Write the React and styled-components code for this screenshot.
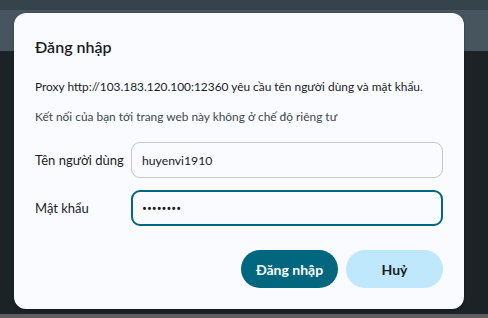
import React from "react";
import styled, { createGlobalStyle } from "styled-components";

const FONT = `"Lato", "Noto Sans", sans-serif`;

const Global = createGlobalStyle`
  html, body { margin: 0; padding: 0; }
  body { width: 488px; height: 318px; overflow: hidden; font-family: ${FONT}; }
  * { box-sizing: border-box; }
`;

const Page = styled.div`
  position: relative;
  width: 488px;
  height: 318px;
  display: flex;
  flex-direction: column;
  background: #1c2326;
`;

const TopStrip = styled.div`
  height: 10px;
  background: #37434b;
`;

const TabBar = styled.div`
  height: 41px;
  background: #46555e;
`;

const Content = styled.div`
  flex: 1;
  background: #1c2326;
`;

const StatusStrip = styled.div`
  height: 4px;
  background: #5e5e5e;
`;

const Dialog = styled.div`
  position: absolute;
  left: 14px;
  top: 13px;
  width: 450px;
  height: 296px;
  background: #f9fbff;
  border-radius: 12px;
  box-shadow: 0 1px 3px rgba(0, 0, 0, 0.35);
  padding: 23px 21px 0 21px;
  display: flex;
  flex-direction: column;
  color: #1a1c1e;
`;

const Title = styled.h1`
  margin: 0;
  font-size: 16px;
  font-weight: 600;
  line-height: 22px;
`;

const Text = styled.p`
  margin: ${(p) => p.$mt}px 0 0 0;
  font-size: 11.9px;
  line-height: 18px;
  white-space: nowrap;
  color: ${(p) => (p.$muted ? "#41484d" : "#1a1c1e")};
`;

const Form = styled.div`
  margin-top: 16px;
  display: flex;
  flex-direction: column;
  gap: 12px;
`;

const Row = styled.div`
  display: flex;
  align-items: center;
`;

const Label = styled.label`
  width: 96px;
  flex: none;
  font-size: 13px;
  color: #1a1c1e;
`;

const Input = styled.input`
  flex: 1;
  height: 36px;
  border-radius: 9px;
  border: ${(p) => (p.$focused ? "2px solid #00677f" : "1px solid #c4c7cb")};
  background: #f9fbff;
  padding: 0 ${(p) => (p.$focused ? 9 : 10)}px;
  font-family: ${(p) => (p.type === "password" ? `"Noto Sans", sans-serif` : FONT)};
  font-size: ${(p) => (p.type === "password" ? 13 : 12.2)}px;
  color: #1a1c1e;
  outline: none;
`;

const Actions = styled.div`
  margin-top: 24px;
  display: flex;
  justify-content: flex-end;
  gap: 8px;
`;

const Button = styled.button`
  width: 97px;
  height: 38px;
  border-radius: 19px;
  border: none;
  font-family: ${FONT};
  font-size: 14px;
  font-weight: 700;
  background: ${(p) => (p.$primary ? "#00677f" : "#bfe8fc")};
  color: ${(p) => (p.$primary ? "#ffffff" : "#1a1c1e")};
  cursor: pointer;
`;

export default function App() {
  return (
    <>
      <Global />
      <Page>
        <TopStrip />
        <TabBar />
        <Content />
        <StatusStrip />
        <Dialog>
          <Title>Đăng nhập</Title>
          <Text $mt={20}>Proxy http://103.183.120.100:12360 yêu cầu tên người dùng và mật khẩu.</Text>
          <Text $mt={12} $muted>Kết nối của bạn tới trang web này không ở chế độ riêng tư</Text>
          <Form>
            <Row>
              <Label>Tên người dùng</Label>
              <Input defaultValue="huyenvi1910" />
            </Row>
            <Row>
              <Label>Mật khẩu</Label>
              <Input type="password" defaultValue="abcdefgh" $focused />
            </Row>
          </Form>
          <Actions>
            <Button $primary>Đăng nhập</Button>
            <Button>Huỷ</Button>
          </Actions>
        </Dialog>
      </Page>
    </>
  );
}
